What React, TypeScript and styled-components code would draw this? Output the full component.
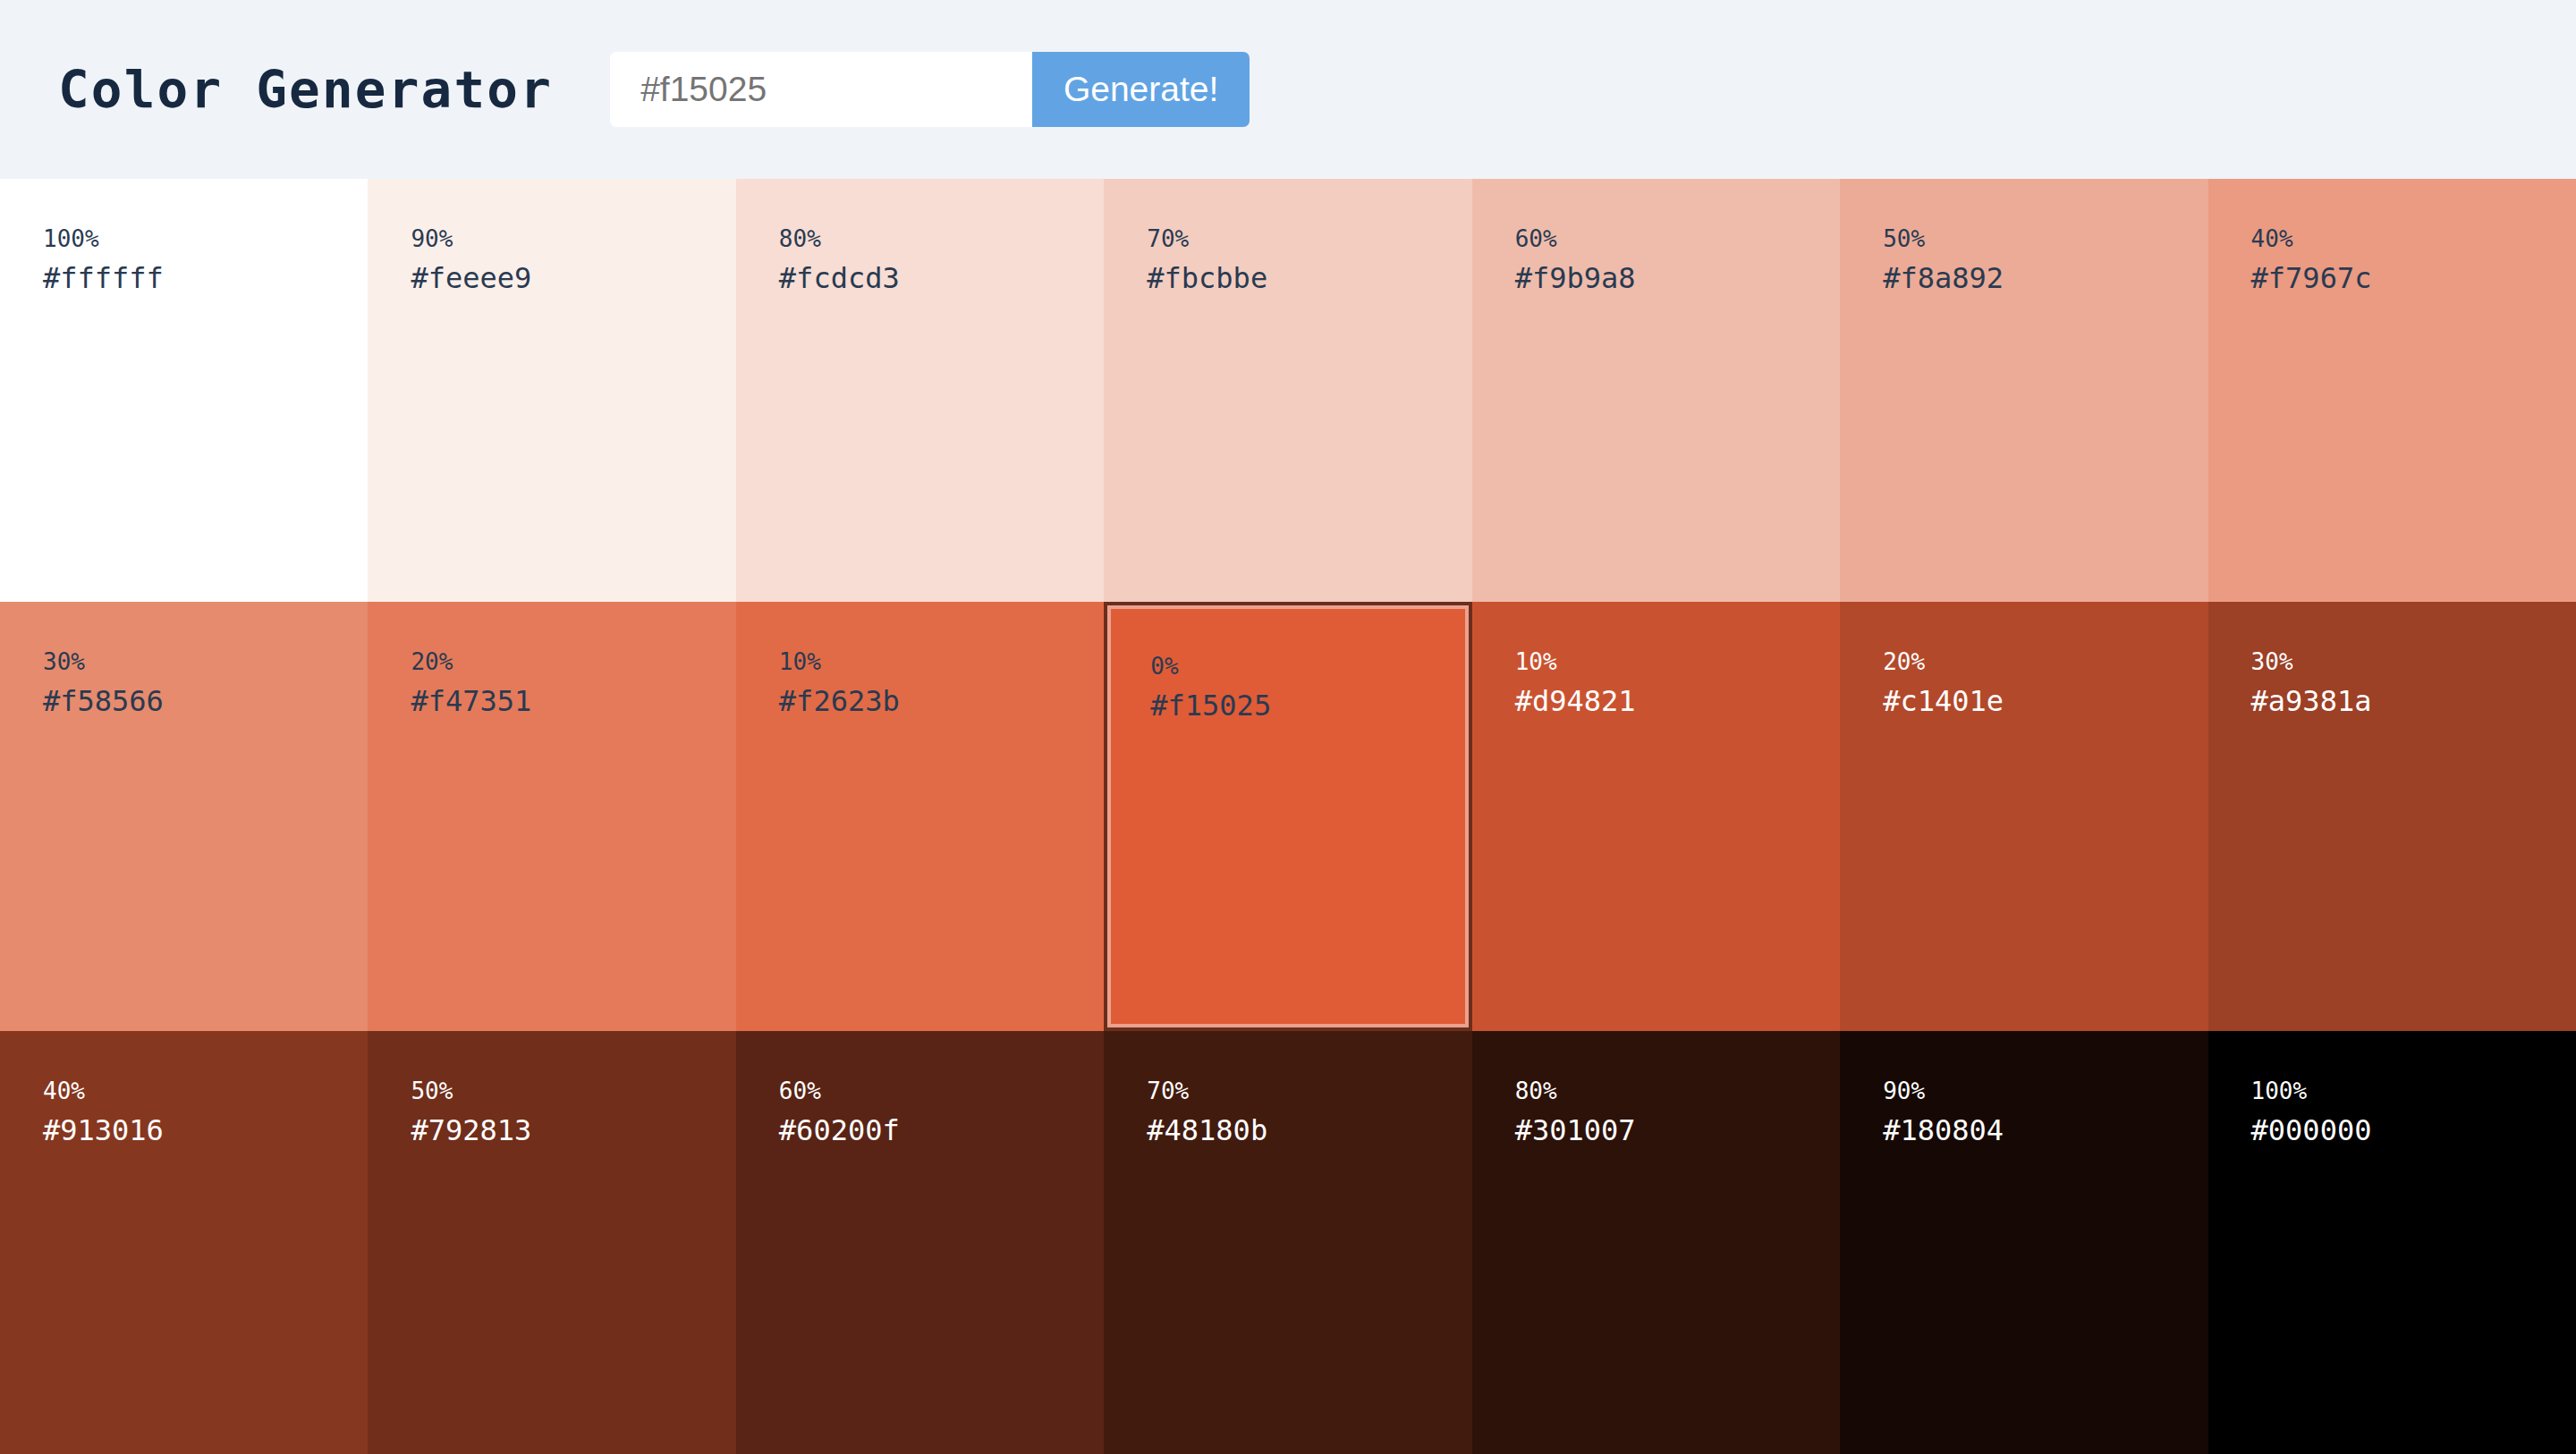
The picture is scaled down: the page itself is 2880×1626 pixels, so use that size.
import styled, { createGlobalStyle } from "styled-components";

// the reference was captured in a wide-gamut profile, so map sRGB hex to what the screen shows
const lin = (c: number) => {
  c /= 255;
  return c <= 0.04045 ? c / 12.92 : Math.pow((c + 0.055) / 1.055, 2.4);
};
const enc = (c: number) => {
  const v = c <= 0.0031308 ? c * 12.92 : 1.055 * Math.pow(c, 1 / 2.4) - 0.055;
  return Math.round(Math.min(1, Math.max(0, v)) * 255);
};
const screen = (hex: string) => {
  const n = parseInt(hex.slice(1), 16);
  const r = lin((n >> 16) & 255);
  const g = lin((n >> 8) & 255);
  const b = lin(n & 255);
  return `rgb(${enc(0.8225 * r + 0.1774 * g)}, ${enc(0.0332 * r + 0.9669 * g)}, ${enc(
    0.0171 * r + 0.0724 * g + 0.9108 * b
  )})`;
};

const GlobalStyle = createGlobalStyle`
  * { box-sizing: border-box; }
  html, body { margin: 0; padding: 0; }
  body {
    background: #ffffff;
    font-family: "DejaVu Sans Mono", "Liberation Mono", monospace;
    color: ${screen("#102a43")};
  }
`;

const Container = styled.section`
  height: 200px;
  background: #f0f4f8;
  display: flex;
  align-items: center;
  padding-left: 65px;
  gap: 64px;
`;

const Title = styled.h3`
  margin: 0;
  font-family: "DejaVu Sans Mono", monospace;
  font-weight: bold;
  font-size: 57.6px;
  letter-spacing: 2.2px;
  color: ${screen("#102a43")};
`;

const Form = styled.form`
  display: flex;
  height: 84px;
  margin-top: -1px;
`;

const Input = styled.input`
  width: 472px;
  border: none;
  outline: none;
  background: #ffffff;
  padding: 0 34px;
  font-family: "Liberation Sans", Arial, sans-serif;
  font-size: 39px;
  border-top-left-radius: 7px;
  border-bottom-left-radius: 7px;
  &::placeholder {
    color: #757575;
  }
`;

const Button = styled.button`
  width: 243px;
  border: none;
  background: ${screen("#49a6e9")};
  color: #ffffff;
  font-family: "Liberation Sans", Arial, sans-serif;
  font-size: 39px;
  padding: 0;
  border-top-right-radius: 7px;
  border-bottom-right-radius: 7px;
  cursor: pointer;
`;

const Colors = styled.section`
  display: grid;
  grid-template-columns: repeat(7, 1fr);
  grid-template-rows: 473px 480px 473px;
`;

const Tile = styled.article<{ $bg: string; $light: boolean; $active: boolean }>`
  background: ${(p) => p.$bg};
  color: ${(p) => (p.$light ? "#ffffff" : screen("#243b53"))};
  padding: 48px;
  ${(p) =>
    p.$active &&
    `
    border: 4px solid rgb(107, 45, 28);
    box-shadow: inset 0 0 0 4px rgb(234, 162, 141);
    padding: 49px 48px 48px 48px;
  `}
`;

const Percent = styled.p`
  margin: 0;
  font-size: 26px;
  line-height: 1.5;
`;

const Hex = styled.p`
  margin: 0;
  font-size: 32px;
  line-height: 1.5;
`;

const list = [
  "#ffffff", "#feeee9", "#fcdcd3", "#fbcbbe", "#f9b9a8", "#f8a892", "#f7967c",
  "#f58566", "#f47351", "#f2623b", "#f15025", "#d94821", "#c1401e", "#a9381a",
  "#913016", "#792813", "#60200f", "#48180b", "#301007", "#180804", "#000000",
];

function App() {
  return (
    <>
      <GlobalStyle />
      <Container>
        <Title>Color Generator</Title>
        <Form onSubmit={(e) => e.preventDefault()}>
          <Input type="text" placeholder="#f15025" />
          <Button type="submit">Generate!</Button>
        </Form>
      </Container>
      <Colors>
        {list.map((hex, index) => {
          const weight = Math.abs(10 - index) * 10;
          return (
            <Tile key={hex} $bg={screen(hex)} $light={index > 10} $active={index === 10}>
              <Percent>{weight}%</Percent>
              <Hex>{hex}</Hex>
            </Tile>
          );
        })}
      </Colors>
    </>
  );
}

export default App;
